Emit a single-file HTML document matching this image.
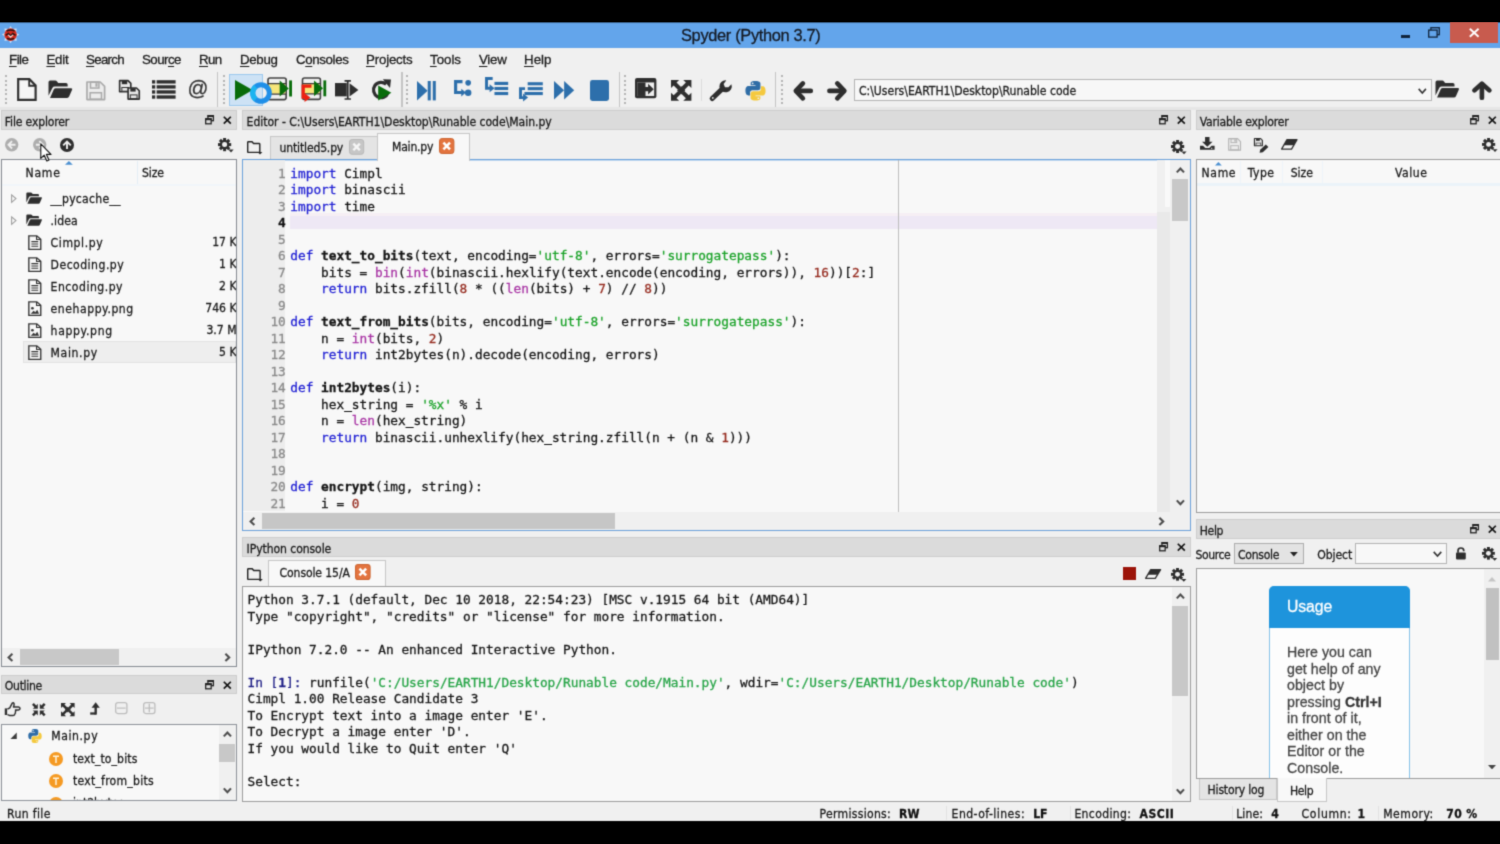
<!DOCTYPE html>
<html><head><meta charset="utf-8"><title>Spyder (Python 3.7)</title>
<style>
html,body{margin:0;padding:0}
body{width:1500px;height:844px;background:#000;position:relative;overflow:hidden}
#r{position:absolute;left:0;top:0;width:1500px;height:844px;overflow:hidden;filter:url(#sf)}
#r div,#r svg,#r pre{position:absolute;box-sizing:border-box}
#r .t,#r .q{white-space:pre}
#r .t,#r .q,#r pre{-webkit-text-stroke:0.28px currentColor}
#r .t span{position:static;white-space:pre}
#r pre{margin:0;white-space:pre}
#r pre span,#r pre b{position:static}
u{text-decoration:underline;text-underline-offset:1.5px;text-decoration-thickness:1px}
</style></head><body><svg width="0" height="0" style="position:absolute"><filter id="sf" x="0" y="0" width="100%" height="100%" color-interpolation-filters="sRGB"><feConvolveMatrix order="3" kernelMatrix="0.0256 0.1088 0.0256 0.1088 0.4624 0.1088 0.0256 0.1088 0.0256" edgeMode="duplicate" preserveAlpha="true"/></filter></svg><div id="r">
<div style="left:0px;top:22px;width:1500px;height:800px;background:#f0f0f0;"></div>
<div style="left:0px;top:22px;width:1500px;height:25.6px;background:#63a5eb;"></div>
<div style="left:0px;top:22px;width:1500px;height:1px;background:#355a82;"></div>
<svg style="left:2.2px;top:25.8px;" width="17.2" height="17.2" viewBox="0 0 17.2 17.2"><path d="M8.6 0 L10.4 3 L14.7 2.5 L14.2 6.8 L17.2 8.6 L14.2 10.4 L14.7 14.7 L10.4 14.2 L8.6 17.2 L6.8 14.2 L2.5 14.7 L3 10.4 L0 8.6 L3 6.8 L2.5 2.5 L6.8 3 Z" fill="#d4e6f8"/><circle cx="8.6" cy="8.6" r="6.3" fill="#d62a1e"/><path d="M4.6 5 Q8.6 3 12.6 5 M3.6 9.4 L6.4 7.4 L8.6 10 L10.8 7.4 L13.6 9.4 M5 12.4 Q8.6 14.2 12.2 12.4" stroke="#2a1414" stroke-width="1.5" fill="none"/><path d="M6.2 8.8 L8.6 11.2 L11 8.8" stroke="#f4e4e0" stroke-width="1.1" fill="none"/></svg>
<div class="t" style="top:25.32px;font:400 16.4px/20px 'Liberation Sans','DejaVu Sans',sans-serif;color:#141a24;left:681px;letter-spacing:-0.33px;">Spyder (Python 3.7)</div>
<div style="left:1400.6px;top:35.4px;width:9.6px;height:2.6px;background:#10243c;"></div>
<svg style="left:1428px;top:27.2px;" width="12" height="10.8" viewBox="0 0 12 10.8"><rect x="2.9" y="0.7" width="8.4" height="7" fill="none" stroke="#10243c" stroke-width="1.3"/><rect x="0.7" y="3.1" width="8.4" height="7" fill="#63a5eb" stroke="#10243c" stroke-width="1.3"/></svg>
<div style="left:1449.6px;top:22.4px;width:48.8px;height:20.4px;background:#c85b4e;"></div>
<svg style="left:1469.4px;top:28px;" width="10.4" height="9.6" viewBox="0 0 10.4 9.6"><path d="M0.8 0.8 L9.6 8.8 M9.6 0.8 L0.8 8.8" stroke="#fff" stroke-width="1.9" fill="none"/></svg>
<div class="t" style="top:51.49px;font:400 13.3px/17px 'Liberation Sans','DejaVu Sans',sans-serif;color:#1a1a1a;left:9px;letter-spacing:-0.51px;"><u>F</u>ile</div>
<div class="t" style="top:51.49px;font:400 13.3px/17px 'Liberation Sans','DejaVu Sans',sans-serif;color:#1a1a1a;left:46.4px;letter-spacing:-0.23px;"><u>E</u>dit</div>
<div class="t" style="top:51.49px;font:400 13.3px/17px 'Liberation Sans','DejaVu Sans',sans-serif;color:#1a1a1a;left:86px;letter-spacing:-0.69px;"><u>S</u>earch</div>
<div class="t" style="top:51.49px;font:400 13.3px/17px 'Liberation Sans','DejaVu Sans',sans-serif;color:#1a1a1a;left:142px;letter-spacing:-0.53px;">Sour<u>c</u>e</div>
<div class="t" style="top:51.49px;font:400 13.3px/17px 'Liberation Sans','DejaVu Sans',sans-serif;color:#1a1a1a;left:199px;letter-spacing:-0.6px;"><u>R</u>un</div>
<div class="t" style="top:51.49px;font:400 13.3px/17px 'Liberation Sans','DejaVu Sans',sans-serif;color:#1a1a1a;left:240px;letter-spacing:-0.32px;"><u>D</u>ebug</div>
<div class="t" style="top:51.49px;font:400 13.3px/17px 'Liberation Sans','DejaVu Sans',sans-serif;color:#1a1a1a;left:296px;letter-spacing:-0.37px;">C<u>o</u>nsoles</div>
<div class="t" style="top:51.49px;font:400 13.3px/17px 'Liberation Sans','DejaVu Sans',sans-serif;color:#1a1a1a;left:366px;letter-spacing:-0.19px;"><u>P</u>rojects</div>
<div class="t" style="top:51.49px;font:400 13.3px/17px 'Liberation Sans','DejaVu Sans',sans-serif;color:#1a1a1a;left:430px;letter-spacing:-0.01px;"><u>T</u>ools</div>
<div class="t" style="top:51.49px;font:400 13.3px/17px 'Liberation Sans','DejaVu Sans',sans-serif;color:#1a1a1a;left:479px;letter-spacing:-0.27px;"><u>V</u>iew</div>
<div class="t" style="top:51.49px;font:400 13.3px/17px 'Liberation Sans','DejaVu Sans',sans-serif;color:#1a1a1a;left:524px;letter-spacing:0.04px;"><u>H</u>elp</div>
<div style="left:4.6px;top:75.4px;width:2px;height:2px;background:#b4b4b4;"></div>
<div style="left:4.6px;top:79.9px;width:2px;height:2px;background:#b4b4b4;"></div>
<div style="left:4.6px;top:84.4px;width:2px;height:2px;background:#b4b4b4;"></div>
<div style="left:4.6px;top:88.9px;width:2px;height:2px;background:#b4b4b4;"></div>
<div style="left:4.6px;top:93.4px;width:2px;height:2px;background:#b4b4b4;"></div>
<div style="left:4.6px;top:97.9px;width:2px;height:2px;background:#b4b4b4;"></div>
<div style="left:4.6px;top:102.4px;width:2px;height:2px;background:#b4b4b4;"></div>
<div style="left:217.2px;top:71.6px;width:1.3px;height:35.4px;background:#c4c4c4;"></div>
<div style="left:223px;top:75.4px;width:2px;height:2px;background:#b4b4b4;"></div>
<div style="left:223px;top:79.9px;width:2px;height:2px;background:#b4b4b4;"></div>
<div style="left:223px;top:84.4px;width:2px;height:2px;background:#b4b4b4;"></div>
<div style="left:223px;top:88.9px;width:2px;height:2px;background:#b4b4b4;"></div>
<div style="left:223px;top:93.4px;width:2px;height:2px;background:#b4b4b4;"></div>
<div style="left:223px;top:97.9px;width:2px;height:2px;background:#b4b4b4;"></div>
<div style="left:223px;top:102.4px;width:2px;height:2px;background:#b4b4b4;"></div>
<div style="left:401.4px;top:71.6px;width:1.3px;height:35.4px;background:#c4c4c4;"></div>
<div style="left:406.4px;top:75.4px;width:2px;height:2px;background:#b4b4b4;"></div>
<div style="left:406.4px;top:79.9px;width:2px;height:2px;background:#b4b4b4;"></div>
<div style="left:406.4px;top:84.4px;width:2px;height:2px;background:#b4b4b4;"></div>
<div style="left:406.4px;top:88.9px;width:2px;height:2px;background:#b4b4b4;"></div>
<div style="left:406.4px;top:93.4px;width:2px;height:2px;background:#b4b4b4;"></div>
<div style="left:406.4px;top:97.9px;width:2px;height:2px;background:#b4b4b4;"></div>
<div style="left:406.4px;top:102.4px;width:2px;height:2px;background:#b4b4b4;"></div>
<div style="left:618.6px;top:71.6px;width:1.3px;height:35.4px;background:#c4c4c4;"></div>
<div style="left:624.2px;top:75.4px;width:2px;height:2px;background:#b4b4b4;"></div>
<div style="left:624.2px;top:79.9px;width:2px;height:2px;background:#b4b4b4;"></div>
<div style="left:624.2px;top:84.4px;width:2px;height:2px;background:#b4b4b4;"></div>
<div style="left:624.2px;top:88.9px;width:2px;height:2px;background:#b4b4b4;"></div>
<div style="left:624.2px;top:93.4px;width:2px;height:2px;background:#b4b4b4;"></div>
<div style="left:624.2px;top:97.9px;width:2px;height:2px;background:#b4b4b4;"></div>
<div style="left:624.2px;top:102.4px;width:2px;height:2px;background:#b4b4b4;"></div>
<div style="left:700.8px;top:79px;width:1px;height:22px;background:#dcdcdc;"></div>
<div style="left:775px;top:71.6px;width:1.3px;height:35.4px;background:#c4c4c4;"></div>
<div style="left:780.6px;top:75.4px;width:2px;height:2px;background:#b4b4b4;"></div>
<div style="left:780.6px;top:79.9px;width:2px;height:2px;background:#b4b4b4;"></div>
<div style="left:780.6px;top:84.4px;width:2px;height:2px;background:#b4b4b4;"></div>
<div style="left:780.6px;top:88.9px;width:2px;height:2px;background:#b4b4b4;"></div>
<div style="left:780.6px;top:93.4px;width:2px;height:2px;background:#b4b4b4;"></div>
<div style="left:780.6px;top:97.9px;width:2px;height:2px;background:#b4b4b4;"></div>
<div style="left:780.6px;top:102.4px;width:2px;height:2px;background:#b4b4b4;"></div>
<svg preserveAspectRatio="none" style="left:17.4px;top:78.4px;overflow:visible;" width="19.8" height="23" viewBox="0 0 20 23.2"><path d="M1.2 1.2 H12.5 L18.8 7.5 V22 H1.2 Z" fill="#f6f6f6" stroke="#2e2e2e" stroke-width="2.2" stroke-linejoin="miter"/><path d="M12.3 1.5 V7.8 H18.6" fill="none" stroke="#2e2e2e" stroke-width="1.8"/></svg>
<svg preserveAspectRatio="none" style="left:48px;top:80px;overflow:visible;" width="24.6" height="18.6" viewBox="0 0 24 18.2"><path d="M0.5 15.5 V2.2 Q0.5 0.6 2.1 0.6 H7.2 Q8.2 0.6 8.8 1.4 L10 3 H17.6 Q19.2 3 19.2 4.6 V6.4 H6.6 Q5 6.4 4.3 7.8 Z" fill="#2e2e2e"/><path d="M2 17.6 L5.6 9.3 Q6.2 8 7.6 8 H22.6 Q24.2 8 23.5 9.5 L20.6 16.2 Q20 17.6 18.6 17.6 Z" fill="#2e2e2e"/></svg>
<svg preserveAspectRatio="none" style="left:86px;top:80.6px;overflow:visible;" width="19.6" height="19.6" viewBox="0 0 20 20"><path d="M1 1 H14.5 L19 5.5 V19 H1 Z" fill="#ececec" stroke="#a9a9a9" stroke-width="1.7" stroke-linejoin="round"/><rect x="4.6" y="1.2" width="8.6" height="6" fill="none" stroke="#a9a9a9" stroke-width="1.5"/><rect x="9.6" y="2.2" width="2.2" height="3.6" fill="#a9a9a9"/><rect x="4.2" y="12" width="11.6" height="6.6" fill="none" stroke="#a9a9a9" stroke-width="1.5"/></svg>
<svg preserveAspectRatio="none" style="left:119px;top:80px;overflow:visible;" width="21.4" height="20.2" viewBox="0 0 21.5 20.5"><g transform="translate(0.00 0.00) scale(0.625)"><path d="M1 1 H14.5 L19 5.5 V19 H1 Z" fill="#e8e8e8" stroke="#2e2e2e" stroke-width="2.6" stroke-linejoin="round"/><rect x="4.6" y="1.2" width="8.6" height="5.6" fill="#2e2e2e"/><rect x="4.6" y="12.2" width="10.8" height="6" fill="#e8e8e8" stroke="#2e2e2e" stroke-width="1.6"/></g><g transform="translate(8.50 7.50) scale(0.625)"><path d="M1 1 H14.5 L19 5.5 V19 H1 Z" fill="#e8e8e8" stroke="#2e2e2e" stroke-width="2.6" stroke-linejoin="round"/><rect x="4.6" y="1.2" width="8.6" height="5.6" fill="#2e2e2e"/><rect x="4.6" y="12.2" width="10.8" height="6" fill="#e8e8e8" stroke="#2e2e2e" stroke-width="1.6"/></g></svg>
<svg preserveAspectRatio="none" style="left:151.6px;top:80px;overflow:visible;" width="23.6" height="18.8" viewBox="0 0 23.4 19"><rect x="0" y="0.2" width="3.2" height="3.4" fill="#2e2e2e"/><rect x="4.6" y="0.2" width="18.8" height="3.4" fill="#2e2e2e"/><rect x="0" y="5.3" width="3.2" height="3.4" fill="#2e2e2e"/><rect x="4.6" y="5.3" width="18.8" height="3.4" fill="#2e2e2e"/><rect x="0" y="10.4" width="3.2" height="3.4" fill="#2e2e2e"/><rect x="4.6" y="10.4" width="18.8" height="3.4" fill="#2e2e2e"/><rect x="0" y="15.5" width="3.2" height="3.4" fill="#2e2e2e"/><rect x="4.6" y="15.5" width="18.8" height="3.4" fill="#2e2e2e"/></svg>
<div class="t" style="top:75.36px;font:400 20.6px/25px 'Liberation Sans','DejaVu Sans',sans-serif;color:#333;left:187.6px;">@</div>
<div style="left:228.8px;top:73.6px;width:34.6px;height:32.2px;background:#cde2f5;border:1px solid #9cc8ee;"></div>
<svg preserveAspectRatio="none" style="left:235px;top:80px;overflow:visible;" width="17.6" height="20.2" viewBox="0 0 17.5 20"><path d="M0 0 L17.5 10 L0 20 Z" fill="#086c0a"/></svg>
<svg preserveAspectRatio="none" style="left:267.4px;top:76.8px;overflow:visible;" width="25.2" height="23.6" viewBox="0 0 25 23.5"><rect x="1" y="1" width="18" height="21.5" rx="2" fill="#f0f0f0" stroke="#404040" stroke-width="1.6"/><rect x="1.8" y="6.8" width="16.4" height="10" fill="#f7e67a"/><path d="M1 6.6 H19 M1 17 H19" stroke="#3a3a3a" stroke-width="1.3"/><path d="M12.6 3.4 L21.6 11.4 L12.6 19.4 Z" fill="#086c0a"/><rect x="22" y="3.4" width="2.8" height="16" fill="#086c0a"/></svg>
<svg preserveAspectRatio="none" style="left:301px;top:76.8px;overflow:visible;" width="25.4" height="24.4" viewBox="0 0 25.5 24.5"><rect x="1.5" y="1" width="18" height="21.5" rx="2" fill="#f0f0f0" stroke="#404040" stroke-width="1.6"/><rect x="2.3" y="6.8" width="16.4" height="10" fill="#f7e67a"/><path d="M1.5 6.6 H19.5 M1.5 17 H19.5" stroke="#3a3a3a" stroke-width="1.3"/><path d="M10.5 9.2 H2.2 V20.2 H5" fill="none" stroke="#ee2010" stroke-width="3.3"/><path d="M3.6 16.2 L9.4 20.6 L3.6 25 Z" fill="#ee2010"/><path d="M13.1 3.4 L22.1 11.4 L13.1 19.4 Z" fill="#086c0a"/><rect x="22.5" y="3.4" width="2.8" height="16" fill="#086c0a"/></svg>
<svg preserveAspectRatio="none" style="left:335px;top:79.8px;overflow:visible;" width="23.4" height="19.8" viewBox="0 0 23.5 19.6"><rect x="0" y="3" width="11.8" height="13.2" fill="#2e2e2e"/><path d="M9.6 0.8 H16 M9.6 18.8 H16 M12.8 0.8 V18.8" stroke="#2e2e2e" stroke-width="1.7" fill="none"/><path d="M14.6 3.2 L23.5 9.8 L14.6 16.4 Z" fill="#2e2e2e"/></svg>
<svg preserveAspectRatio="none" style="left:371.4px;top:78.6px;overflow:visible;" width="20.6" height="21.8" viewBox="0 0 20.6 21.6"><path d="M15.2 5.2 A7.6 7.6 0 1 0 17.2 13.6" fill="none" stroke="#2e2e2e" stroke-width="3.2"/><path d="M11.8 0.2 L20 0.6 L19 8.8 Z" fill="#2e2e2e"/><path d="M7.2 6.4 L20.4 13.6 L7.2 21.4 Z" fill="#086c0a"/></svg>
<svg style="left:249.3px;top:81.2px;" width="24" height="24" viewBox="0 0 24 24"><circle cx="12" cy="12" r="8.3" fill="none" stroke="#1f8fe8" stroke-width="5"/><path d="M6.6 18.3 A8.3 8.3 0 0 1 6.6 5.7" fill="none" stroke="#1cb4f0" stroke-width="5"/></svg>
<svg preserveAspectRatio="none" style="left:416.6px;top:80.8px;overflow:visible;" width="18.8" height="19.4" viewBox="0 0 18.6 19.2"><path d="M0 0 L10.5 9.6 L0 19.2 Z" fill="#2d6fab"/><rect x="10.6" y="0" width="3" height="19.2" fill="#2d6fab"/><rect x="15.6" y="0" width="3" height="19.2" fill="#2d6fab"/></svg>
<svg preserveAspectRatio="none" style="left:453.6px;top:80px;overflow:visible;" width="17.8" height="16.2" viewBox="0 0 17.6 16"><path d="M8.4 1.6 H1.6 V12.4 H8.4" fill="none" stroke="#2d6fab" stroke-width="3.1"/><path d="M7.2 8.6 L11.8 12.4 L7.2 16.2 Z" fill="#2d6fab"/><circle cx="14" cy="2.8" r="2.8" fill="#2d6fab"/><circle cx="14" cy="12.6" r="3.2" fill="#2d6fab"/></svg>
<svg preserveAspectRatio="none" style="left:485px;top:77px;overflow:visible;" width="23.2" height="18.2" viewBox="0 0 23 18"><path d="M7.6 1.5 H1.5 V11.2 H5.5" fill="none" stroke="#2d6fab" stroke-width="2.9"/><path d="M4.6 7.2 L9.4 11.2 L4.6 15.2 Z" fill="#2d6fab"/><rect x="9.4" y="4.8" width="13.6" height="3.1" fill="#2d6fab"/><rect x="9.4" y="9.8" width="13.6" height="3.1" fill="#2d6fab"/><rect x="9.4" y="14.8" width="13.6" height="3.1" fill="#2d6fab"/></svg>
<svg preserveAspectRatio="none" style="left:518.6px;top:81.8px;overflow:visible;" width="24" height="19.4" viewBox="0 0 23.8 19.4"><rect x="8.6" y="0.2" width="15" height="3.1" fill="#2d6fab"/><rect x="8.6" y="5.1" width="15" height="3.1" fill="#2d6fab"/><rect x="5.4" y="10" width="18.2" height="3.1" fill="#2d6fab"/><path d="M6 6.6 H1.5 V15.6 H4.6" fill="none" stroke="#2d6fab" stroke-width="2.9"/><path d="M4 11.6 L9 15.6 L4 19.4 Z" fill="#2d6fab"/></svg>
<svg preserveAspectRatio="none" style="left:554px;top:81px;overflow:visible;" width="20.2" height="18.4" viewBox="0 0 20 18"><path d="M0 0 L10 9 L0 18 Z" fill="#2d6fab"/><path d="M10 0 L20 9 L10 18 Z" fill="#2d6fab"/></svg>
<div style="left:589.6px;top:80px;width:19.6px;height:20.8px;background:#2d6fab;border-radius:2.4px;"></div>
<svg preserveAspectRatio="none" style="left:634.6px;top:78.4px;overflow:visible;" width="21.4" height="20.2" viewBox="0 0 21.2 20"><rect x="0" y="0" width="21.2" height="20" rx="2" fill="#2e2e2e"/><rect x="2.2" y="4.4" width="16.8" height="13.4" fill="#f0f0f0"/><rect x="2.2" y="4.4" width="8.2" height="13.4" fill="#2e2e2e"/><path d="M8.2 9 H13 V5.8 L18.6 11.1 L13 16.4 V13.2 H8.2 Z" fill="#2e2e2e"/></svg>
<svg preserveAspectRatio="none" style="left:670.6px;top:80px;overflow:visible;" width="20.4" height="20.8" viewBox="0 0 20 20.6"><path d="M0 0 H8 L5.4 2.6 L9.8 7 L7 9.8 L2.6 5.4 L0 8 Z" fill="#2e2e2e"/><g transform="translate(20 0) scale(-1 1)"><path d="M0 0 H8 L5.4 2.6 L9.8 7 L7 9.8 L2.6 5.4 L0 8 Z" fill="#2e2e2e"/></g><g transform="translate(0 20.6) scale(1 -1)"><path d="M0 0 H8 L5.4 2.6 L9.8 7 L7 9.8 L2.6 5.4 L0 8 Z" fill="#2e2e2e"/></g><g transform="translate(20 20.6) scale(-1 -1)"><path d="M0 0 H8 L5.4 2.6 L9.8 7 L7 9.8 L2.6 5.4 L0 8 Z" fill="#2e2e2e"/></g><rect x="7.2" y="7.4" width="5.6" height="5.8" fill="#2e2e2e" transform="rotate(45 10 10.3)"/></svg>
<svg preserveAspectRatio="none" style="left:710px;top:80.4px;overflow:visible;" width="22" height="20.8" viewBox="0 0 22 21.5"><path d="M2.2 19.2 L12.4 9" stroke="#2e2e2e" stroke-width="5" stroke-linecap="round" fill="none"/><path d="M21.4 4.4 A6.2 6.2 0 1 1 16.2 0.4 L13.6 4.2 L15 7.4 L18.4 7.6 Z" fill="#2e2e2e"/><circle cx="2.8" cy="18.6" r="0.9" fill="#f0f0f0"/></svg>
<svg preserveAspectRatio="none" style="left:745px;top:80.6px;overflow:visible;" width="21" height="19.6" viewBox="0 0 20 19.6"><path d="M9.9 0 C5 0 5.4 2.1 5.4 2.1 V4.3 H10 V5 H3.5 C3.5 5 0.4 4.6 0.4 9.6 C0.4 14.6 3.1 14.4 3.1 14.4 H4.8 V12 C4.8 12 4.7 9.3 7.5 9.3 H12.1 C12.1 9.3 14.7 9.3 14.7 6.8 V2.6 C14.7 2.6 15.1 0 9.9 0 Z M7.3 1.5 A0.85 0.85 0 1 1 7.3 3.2 A0.85 0.85 0 1 1 7.3 1.5 Z" fill="#2f6da6"/><path d="M10.1 19.6 C15 19.6 14.6 17.5 14.6 17.5 V15.3 H10 V14.6 H16.5 C16.5 14.6 19.6 15 19.6 10 C19.6 5 16.9 5.2 16.9 5.2 H15.2 V7.6 C15.2 7.6 15.3 10.3 12.5 10.3 H7.9 C7.9 10.3 5.3 10.3 5.3 12.8 V17 C5.3 17 4.9 19.6 10.1 19.6 Z M12.7 18.1 A0.85 0.85 0 1 1 12.7 16.4 A0.85 0.85 0 1 1 12.7 18.1 Z" fill="#f4c93f"/></svg>
<svg preserveAspectRatio="none" style="left:793px;top:81px;overflow:visible;" width="20.2" height="19.8" viewBox="0 0 20 19.6"><path d="M9.8 2.4 L2.8 9.8 L9.8 17.2" fill="none" stroke="#2e2e2e" stroke-width="4.6" stroke-linejoin="round" stroke-linecap="round"/><path d="M3.4 9.8 H17.6" stroke="#2e2e2e" stroke-width="4.6" stroke-linecap="round"/></svg>
<svg preserveAspectRatio="none" style="left:826.6px;top:81px;overflow:visible;" width="20.2" height="19.8" viewBox="0 0 20 19.6"><g transform="translate(20 0) scale(-1 1)"><path d="M9.8 2.4 L2.8 9.8 L9.8 17.2" fill="none" stroke="#2e2e2e" stroke-width="4.6" stroke-linejoin="round" stroke-linecap="round"/><path d="M3.4 9.8 H17.6" stroke="#2e2e2e" stroke-width="4.6" stroke-linecap="round"/></g></svg>
<div style="left:854px;top:78.8px;width:577.8px;height:22px;background:#f7f7f7;border:1px solid #b4b4b4;"></div>
<div class="t" style="top:83.01px;font:400 12.1px/16px 'DejaVu Sans Condensed','Liberation Sans',sans-serif;color:#1c1c1c;left:859px;letter-spacing:-0.02px;">C:\Users\EARTH1\Desktop\Runable code</div>
<svg preserveAspectRatio="none" style="left:1417.8px;top:87.6px;overflow:visible;" width="8.6" height="6" viewBox="0 0 8.8 5.8"><path d="M0.7 0.8 L4.4 4.8 L8.1 0.8" stroke="#333" stroke-width="1.6" fill="none"/></svg>
<svg preserveAspectRatio="none" style="left:1435px;top:80px;overflow:visible;" width="24.4" height="18.2" viewBox="0 0 24 18.2"><path d="M0.5 15.5 V2.2 Q0.5 0.6 2.1 0.6 H7.2 Q8.2 0.6 8.8 1.4 L10 3 H17.6 Q19.2 3 19.2 4.6 V6.4 H6.6 Q5 6.4 4.3 7.8 Z" fill="#2e2e2e"/><path d="M2 17.6 L5.6 9.3 Q6.2 8 7.6 8 H22.6 Q24.2 8 23.5 9.5 L20.6 16.2 Q20 17.6 18.6 17.6 Z" fill="#2e2e2e"/></svg>
<svg preserveAspectRatio="none" style="left:1472.4px;top:81.2px;overflow:visible;" width="19.8" height="19.2" viewBox="0 0 19.6 20"><g transform="rotate(90 9.8 9.8)"><path d="M9.8 2.4 L2.8 9.8 L9.8 17.2" fill="none" stroke="#2e2e2e" stroke-width="4.6" stroke-linejoin="round" stroke-linecap="round"/><path d="M3.4 9.8 H17.6" stroke="#2e2e2e" stroke-width="4.6" stroke-linecap="round"/></g></svg>
<div style="left:0px;top:107px;width:1500px;height:3.4px;background:#e6e6e6;"></div>
<div style="left:0.6px;top:110.2px;width:236.8px;height:19.4px;background:#dbdbdb;border:1px solid #cdcdcd;"></div>
<div class="t" style="top:113.61px;font:400 12.1px/16px 'DejaVu Sans Condensed','Liberation Sans',sans-serif;color:#1a1a1a;left:4.8px;letter-spacing:-0.16px;">File explorer</div>
<svg preserveAspectRatio="none" style="left:205.4px;top:114.7px;overflow:visible;" width="9.2" height="9.6" viewBox="0 0 9.4 9.6"><rect x="3" y="0.7" width="5.6" height="5" fill="none" stroke="#222" stroke-width="1.3"/><rect x="2.6" y="0.2" width="6.4" height="1.8" fill="#222"/><rect x="0.7" y="3.8" width="5.6" height="5" fill="#dcdcdc" stroke="#222" stroke-width="1.3"/><rect x="0.2" y="3.3" width="6.6" height="1.9" fill="#222"/></svg>
<svg preserveAspectRatio="none" style="left:223.4px;top:115.7px;overflow:visible;" width="8.6" height="8.4" viewBox="0 0 8.8 8.8"><path d="M0.8 0.8 L8 8 M8 0.8 L0.8 8" stroke="#111" stroke-width="1.7" fill="none"/></svg>
<svg preserveAspectRatio="none" style="left:5.4px;top:137.8px;overflow:visible;" width="13.4" height="13.6" viewBox="0 0 14 14"><circle cx="7" cy="7" r="7" fill="#adadad"/><g transform="rotate(0 7 7)"><path d="M7.4 3.2 L3.6 7 L7.4 10.8 M4 7 H11" stroke="#f0f0f0" stroke-width="1.9" fill="none"/></g></svg>
<svg preserveAspectRatio="none" style="left:33px;top:137.8px;overflow:visible;" width="13.4" height="13.6" viewBox="0 0 14 14"><circle cx="7" cy="7" r="7" fill="#adadad"/><g transform="rotate(180 7 7)"><path d="M7.4 3.2 L3.6 7 L7.4 10.8 M4 7 H11" stroke="#f0f0f0" stroke-width="1.9" fill="none"/></g></svg>
<svg preserveAspectRatio="none" style="left:60px;top:137.8px;overflow:visible;" width="14" height="14" viewBox="0 0 14 14"><circle cx="7" cy="7" r="7" fill="#2e2e2e"/><g transform="rotate(90 7 7)"><path d="M7.4 3.2 L3.6 7 L7.4 10.8 M4 7 H11" stroke="#f0f0f0" stroke-width="1.9" fill="none"/></g></svg>
<svg preserveAspectRatio="none" style="left:217.6px;top:138.2px;overflow:visible;" width="15.6" height="14.6" viewBox="0 0 15.6 14.6"><rect x="5.10" y="0.00" width="3" height="3.4" fill="#2e2e2e" transform="rotate(0 6.60 6.60)"/><rect x="5.10" y="0.00" width="3" height="3.4" fill="#2e2e2e" transform="rotate(45 6.60 6.60)"/><rect x="5.10" y="0.00" width="3" height="3.4" fill="#2e2e2e" transform="rotate(90 6.60 6.60)"/><rect x="5.10" y="0.00" width="3" height="3.4" fill="#2e2e2e" transform="rotate(135 6.60 6.60)"/><rect x="5.10" y="0.00" width="3" height="3.4" fill="#2e2e2e" transform="rotate(180 6.60 6.60)"/><rect x="5.10" y="0.00" width="3" height="3.4" fill="#2e2e2e" transform="rotate(225 6.60 6.60)"/><rect x="5.10" y="0.00" width="3" height="3.4" fill="#2e2e2e" transform="rotate(270 6.60 6.60)"/><rect x="5.10" y="0.00" width="3" height="3.4" fill="#2e2e2e" transform="rotate(315 6.60 6.60)"/><circle cx="6.6" cy="6.6" r="4.7" fill="#2e2e2e"/><circle cx="6.6" cy="6.6" r="2.5" fill="#f0f0f0"/><path d="M10.4 11.6 H15.6 L13 14.4 Z" fill="#2e2e2e"/></svg>
<div style="left:0.6px;top:159.4px;width:236.8px;height:508px;background:#f8f8f8;border:1px solid #858a92;"></div>
<div class="t" style="top:165.41px;font:400 12.1px/16px 'DejaVu Sans Condensed','Liberation Sans',sans-serif;color:#1a1a1a;left:25.6px;letter-spacing:0.72px;">Name</div>
<div class="t" style="top:165.41px;font:400 12.1px/16px 'DejaVu Sans Condensed','Liberation Sans',sans-serif;color:#1a1a1a;left:142px;letter-spacing:-0.14px;">Size</div>
<svg preserveAspectRatio="none" style="left:65.4px;top:161.2px;overflow:visible;" width="7.8" height="3.8" viewBox="0 0 8 4"><path d="M0 4 L4 0 L8 4 Z" fill="#4b8fd0"/></svg>
<div style="left:137px;top:161px;width:1px;height:24px;background:#e4eef5;"></div>
<div style="left:1.6px;top:184.4px;width:234.8px;height:2px;background:#f1f6fa;"></div>
<svg preserveAspectRatio="none" style="left:11px;top:193.8px;overflow:visible;" width="5.8" height="9.2" viewBox="0 0 5.6 9.2"><path d="M0.6 0.8 L4.8 4.6 L0.6 8.4 Z" fill="#f8f8f8" stroke="#9a9a9a" stroke-width="1"/></svg>
<svg preserveAspectRatio="none" style="left:26px;top:192px;overflow:visible;" width="16.2" height="12.2" viewBox="0 0 24 18.2"><path d="M0.5 15.5 V2.2 Q0.5 0.6 2.1 0.6 H7.2 Q8.2 0.6 8.8 1.4 L10 3 H17.6 Q19.2 3 19.2 4.6 V6.4 H6.6 Q5 6.4 4.3 7.8 Z" fill="#2e2e2e"/><path d="M2 17.6 L5.6 9.3 Q6.2 8 7.6 8 H22.6 Q24.2 8 23.5 9.5 L20.6 16.2 Q20 17.6 18.6 17.6 Z" fill="#2e2e2e"/></svg>
<div class="t" style="top:190.61px;font:400 12.1px/16px 'DejaVu Sans Condensed','Liberation Sans',sans-serif;color:#1a1a1a;left:50.6px;letter-spacing:0.26px;">__pycache__</div>
<svg preserveAspectRatio="none" style="left:11px;top:215.8px;overflow:visible;" width="5.8" height="9.2" viewBox="0 0 5.6 9.2"><path d="M0.6 0.8 L4.8 4.6 L0.6 8.4 Z" fill="#f8f8f8" stroke="#9a9a9a" stroke-width="1"/></svg>
<svg preserveAspectRatio="none" style="left:26px;top:214px;overflow:visible;" width="16.2" height="12.2" viewBox="0 0 24 18.2"><path d="M0.5 15.5 V2.2 Q0.5 0.6 2.1 0.6 H7.2 Q8.2 0.6 8.8 1.4 L10 3 H17.6 Q19.2 3 19.2 4.6 V6.4 H6.6 Q5 6.4 4.3 7.8 Z" fill="#2e2e2e"/><path d="M2 17.6 L5.6 9.3 Q6.2 8 7.6 8 H22.6 Q24.2 8 23.5 9.5 L20.6 16.2 Q20 17.6 18.6 17.6 Z" fill="#2e2e2e"/></svg>
<div class="t" style="top:212.61px;font:400 12.1px/16px 'DejaVu Sans Condensed','Liberation Sans',sans-serif;color:#1a1a1a;left:50.6px;letter-spacing:0.05px;">.idea</div>
<svg preserveAspectRatio="none" style="left:28px;top:234.8px;overflow:visible;" width="13.6" height="15.2" viewBox="0 0 13 16"><path d="M0.8 0.8 H8.4 L12.2 4.6 V15.2 H0.8 Z" fill="#f8f8f8" stroke="#333" stroke-width="1.3"/><path d="M8.2 1 V4.8 H12" fill="none" stroke="#333" stroke-width="1.1"/><path d="M3.2 7 H9.8 M3.2 9.4 H9.8 M3.2 11.8 H9.8" stroke="#333" stroke-width="1.1"/></svg>
<div class="t" style="top:234.61px;font:400 12.1px/16px 'DejaVu Sans Condensed','Liberation Sans',sans-serif;color:#1a1a1a;left:50.6px;letter-spacing:0.58px;">Cimpl.py</div>
<div style="left:180px;top:232px;width:56.2px;height:20px;overflow:hidden"><div class="q" style="right:-0.4px;top:0;font:400 12.1px/20px 'DejaVu Sans Condensed','Liberation Sans',sans-serif;color:#1a1a1a">17 K</div></div>
<svg preserveAspectRatio="none" style="left:28px;top:256.8px;overflow:visible;" width="13.6" height="15.2" viewBox="0 0 13 16"><path d="M0.8 0.8 H8.4 L12.2 4.6 V15.2 H0.8 Z" fill="#f8f8f8" stroke="#333" stroke-width="1.3"/><path d="M8.2 1 V4.8 H12" fill="none" stroke="#333" stroke-width="1.1"/><path d="M3.2 7 H9.8 M3.2 9.4 H9.8 M3.2 11.8 H9.8" stroke="#333" stroke-width="1.1"/></svg>
<div class="t" style="top:256.61px;font:400 12.1px/16px 'DejaVu Sans Condensed','Liberation Sans',sans-serif;color:#1a1a1a;left:50.6px;letter-spacing:0.48px;">Decoding.py</div>
<div style="left:180px;top:254px;width:56.2px;height:20px;overflow:hidden"><div class="q" style="right:-0.4px;top:0;font:400 12.1px/20px 'DejaVu Sans Condensed','Liberation Sans',sans-serif;color:#1a1a1a">1 K</div></div>
<svg preserveAspectRatio="none" style="left:28px;top:278.8px;overflow:visible;" width="13.6" height="15.2" viewBox="0 0 13 16"><path d="M0.8 0.8 H8.4 L12.2 4.6 V15.2 H0.8 Z" fill="#f8f8f8" stroke="#333" stroke-width="1.3"/><path d="M8.2 1 V4.8 H12" fill="none" stroke="#333" stroke-width="1.1"/><path d="M3.2 7 H9.8 M3.2 9.4 H9.8 M3.2 11.8 H9.8" stroke="#333" stroke-width="1.1"/></svg>
<div class="t" style="top:278.61px;font:400 12.1px/16px 'DejaVu Sans Condensed','Liberation Sans',sans-serif;color:#1a1a1a;left:50.6px;letter-spacing:0.5px;">Encoding.py</div>
<div style="left:180px;top:276px;width:56.2px;height:20px;overflow:hidden"><div class="q" style="right:-0.4px;top:0;font:400 12.1px/20px 'DejaVu Sans Condensed','Liberation Sans',sans-serif;color:#1a1a1a">2 K</div></div>
<svg preserveAspectRatio="none" style="left:28px;top:300.8px;overflow:visible;" width="13.6" height="15.2" viewBox="0 0 13 16"><path d="M0.8 0.8 H8.4 L12.2 4.6 V15.2 H0.8 Z" fill="#f8f8f8" stroke="#333" stroke-width="1.3"/><path d="M8.2 1 V4.8 H12" fill="none" stroke="#333" stroke-width="1.1"/><circle cx="4.2" cy="7.6" r="1.3" fill="#333"/><path d="M2.6 13.4 L5.4 10.2 L7 11.8 L8.8 9.2 L10.6 13.4 Z" fill="#333"/></svg>
<div class="t" style="top:300.61px;font:400 12.1px/16px 'DejaVu Sans Condensed','Liberation Sans',sans-serif;color:#1a1a1a;left:50.6px;letter-spacing:0.55px;">enehappy.png</div>
<div style="left:180px;top:298px;width:56.2px;height:20px;overflow:hidden"><div class="q" style="right:-0.4px;top:0;font:400 12.1px/20px 'DejaVu Sans Condensed','Liberation Sans',sans-serif;color:#1a1a1a">746 K</div></div>
<svg preserveAspectRatio="none" style="left:28px;top:322.8px;overflow:visible;" width="13.6" height="15.2" viewBox="0 0 13 16"><path d="M0.8 0.8 H8.4 L12.2 4.6 V15.2 H0.8 Z" fill="#f8f8f8" stroke="#333" stroke-width="1.3"/><path d="M8.2 1 V4.8 H12" fill="none" stroke="#333" stroke-width="1.1"/><circle cx="4.2" cy="7.6" r="1.3" fill="#333"/><path d="M2.6 13.4 L5.4 10.2 L7 11.8 L8.8 9.2 L10.6 13.4 Z" fill="#333"/></svg>
<div class="t" style="top:322.61px;font:400 12.1px/16px 'DejaVu Sans Condensed','Liberation Sans',sans-serif;color:#1a1a1a;left:50.6px;letter-spacing:0.66px;">happy.png</div>
<div style="left:180px;top:320px;width:56.2px;height:20px;overflow:hidden"><div class="q" style="right:-0.4px;top:0;font:400 12.1px/20px 'DejaVu Sans Condensed','Liberation Sans',sans-serif;color:#1a1a1a">3.7 M</div></div>
<div style="left:23.2px;top:341.2px;width:213px;height:21.4px;background:#eeeeee;border:1px solid #e3e3e3;"></div>
<svg preserveAspectRatio="none" style="left:28px;top:344.8px;overflow:visible;" width="13.6" height="15.2" viewBox="0 0 13 16"><path d="M0.8 0.8 H8.4 L12.2 4.6 V15.2 H0.8 Z" fill="#f8f8f8" stroke="#333" stroke-width="1.3"/><path d="M8.2 1 V4.8 H12" fill="none" stroke="#333" stroke-width="1.1"/><path d="M3.2 7 H9.8 M3.2 9.4 H9.8 M3.2 11.8 H9.8" stroke="#333" stroke-width="1.1"/></svg>
<div class="t" style="top:344.61px;font:400 12.1px/16px 'DejaVu Sans Condensed','Liberation Sans',sans-serif;color:#1a1a1a;left:50.6px;letter-spacing:0.63px;">Main.py</div>
<div style="left:180px;top:342px;width:56.2px;height:20px;overflow:hidden"><div class="q" style="right:-0.4px;top:0;font:400 12.1px/20px 'DejaVu Sans Condensed','Liberation Sans',sans-serif;color:#1a1a1a">5 K</div></div>
<div style="left:1.6px;top:647.6px;width:234.8px;height:18.8px;background:#f0f0f0;"></div>
<div style="left:20px;top:648.6px;width:98.8px;height:16.8px;background:#c8c8c8;"></div>
<svg preserveAspectRatio="none" style="left:6.2px;top:652.6px;overflow:visible;" width="8.8" height="8.8" viewBox="0 0 8.8 8.8"><g transform="rotate(90 4.4 4.4)"><path d="M0.8 2.4 L4.4 6.2 L8 2.4" stroke="#4c4c4c" stroke-width="2.1" fill="none"/></g></svg>
<svg preserveAspectRatio="none" style="left:223px;top:652.6px;overflow:visible;" width="8.8" height="8.8" viewBox="0 0 8.8 8.8"><g transform="rotate(270 4.4 4.4)"><path d="M0.8 2.4 L4.4 6.2 L8 2.4" stroke="#4c4c4c" stroke-width="2.1" fill="none"/></g></svg>
<svg style="left:40.4px;top:143.4px;" width="12" height="19" viewBox="0 0 12 19"><path d="M0.8 0.8 V15.4 L4.2 12.2 L6.8 18 L9 17 L6.4 11.4 H11 Z" fill="#fff" stroke="#111" stroke-width="1.1" stroke-linejoin="round"/></svg>
<div style="left:0.6px;top:675.4px;width:236.8px;height:18.6px;background:#dbdbdb;border:1px solid #cdcdcd;"></div>
<div class="t" style="top:678.01px;font:400 12.1px/16px 'DejaVu Sans Condensed','Liberation Sans',sans-serif;color:#1a1a1a;left:4.8px;letter-spacing:-0.31px;">Outline</div>
<svg preserveAspectRatio="none" style="left:205.4px;top:679.5px;overflow:visible;" width="9.2" height="9.6" viewBox="0 0 9.4 9.6"><rect x="3" y="0.7" width="5.6" height="5" fill="none" stroke="#222" stroke-width="1.3"/><rect x="2.6" y="0.2" width="6.4" height="1.8" fill="#222"/><rect x="0.7" y="3.8" width="5.6" height="5" fill="#dcdcdc" stroke="#222" stroke-width="1.3"/><rect x="0.2" y="3.3" width="6.6" height="1.9" fill="#222"/></svg>
<svg preserveAspectRatio="none" style="left:223.4px;top:680.5px;overflow:visible;" width="8.6" height="8.4" viewBox="0 0 8.8 8.8"><path d="M0.8 0.8 L8 8 M8 0.8 L0.8 8" stroke="#111" stroke-width="1.7" fill="none"/></svg>
<svg preserveAspectRatio="none" style="left:4px;top:701.8px;overflow:visible;" width="16.6" height="14.2" viewBox="0 0 17.2 14.2"><path d="M0.8 6.4 H3.4 V13 H0.8 Z" fill="#2e2e2e"/><path d="M3.6 7.2 L6 5.8 L8.4 1.4 Q9.6 0.2 10.4 1.6 Q10.8 2.8 9.8 5 H15 Q16.6 5.2 16.6 6.5 Q16.6 7.8 15 7.9 H11.8 Q12.6 9 11.8 10 Q12.2 11.2 11.2 12 Q11.2 13.4 9.6 13.4 H5.6 L3.6 12.6" fill="#f0f0f0" stroke="#2e2e2e" stroke-width="1.5" stroke-linejoin="round"/></svg>
<svg preserveAspectRatio="none" style="left:31.6px;top:703px;overflow:visible;" width="13.6" height="13.2" viewBox="0 0 13.6 13.2"><path d="M5.8 5.8 H0.8 L2.4 4.2 L0 1.8 L1.8 0 L4.2 2.4 L5.8 0.8 Z" fill="#2e2e2e"/><g transform="translate(13.6 0) scale(-1 1)"><path d="M5.8 5.8 H0.8 L2.4 4.2 L0 1.8 L1.8 0 L4.2 2.4 L5.8 0.8 Z" fill="#2e2e2e"/></g><g transform="translate(0 13.2) scale(1 -1)"><path d="M5.8 5.8 H0.8 L2.4 4.2 L0 1.8 L1.8 0 L4.2 2.4 L5.8 0.8 Z" fill="#2e2e2e"/></g><g transform="translate(13.6 13.2) scale(-1 -1)"><path d="M5.8 5.8 H0.8 L2.4 4.2 L0 1.8 L1.8 0 L4.2 2.4 L5.8 0.8 Z" fill="#2e2e2e"/></g></svg>
<svg preserveAspectRatio="none" style="left:60.6px;top:703px;overflow:visible;" width="13.6" height="13.2" viewBox="0 0 13.6 13.2"><path d="M0 0 H5 L3.4 1.6 L6.4 4.6 L4.6 6.4 L1.6 3.4 L0 5 Z" fill="#2e2e2e"/><g transform="translate(13.6 0) scale(-1 1)"><path d="M0 0 H5 L3.4 1.6 L6.4 4.6 L4.6 6.4 L1.6 3.4 L0 5 Z" fill="#2e2e2e"/></g><g transform="translate(0 13.2) scale(1 -1)"><path d="M0 0 H5 L3.4 1.6 L6.4 4.6 L4.6 6.4 L1.6 3.4 L0 5 Z" fill="#2e2e2e"/></g><g transform="translate(13.6 13.2) scale(-1 -1)"><path d="M0 0 H5 L3.4 1.6 L6.4 4.6 L4.6 6.4 L1.6 3.4 L0 5 Z" fill="#2e2e2e"/></g><rect x="4.8" y="4.6" width="4" height="4" fill="#2e2e2e" transform="rotate(45 6.8 6.6)"/></svg>
<svg preserveAspectRatio="none" style="left:90px;top:702.2px;overflow:visible;" width="10" height="13.2" viewBox="0 0 10.4 13.4"><path d="M5.9 12.8 V4" stroke="#2e2e2e" stroke-width="2.5" fill="none"/><path d="M1.6 5.8 L5.9 0.3 L10.2 5.8 Z" fill="#2e2e2e"/><path d="M0.2 11.7 H6" stroke="#2e2e2e" stroke-width="2.3"/></svg>
<svg preserveAspectRatio="none" style="left:115.2px;top:702.4px;overflow:visible;" width="12.6" height="12.2" viewBox="0 0 12.6 13.2"><rect x="0.7" y="0.7" width="11.2" height="11.8" rx="2.2" fill="none" stroke="#bcbcbc" stroke-width="1.3"/><path d="M2 6.6 H10.6" stroke="#bcbcbc" stroke-width="1.3"/></svg>
<svg preserveAspectRatio="none" style="left:142.8px;top:702.4px;overflow:visible;" width="12.6" height="12.2" viewBox="0 0 12.6 13.2"><rect x="0.7" y="0.7" width="11.2" height="11.8" rx="2.2" fill="none" stroke="#bcbcbc" stroke-width="1.3"/><path d="M2 6.6 H10.6" stroke="#bcbcbc" stroke-width="1.3"/><path d="M6.3 2 V11.2" stroke="#bcbcbc" stroke-width="1.3"/></svg>
<div style="left:0.6px;top:723.6px;width:236.8px;height:77.6px;background:#f8f8f8;border:1px solid #8d9299;overflow:hidden">
</div>
<div style="left:1.6px;top:724.6px;width:234.8px;height:75.6px;background:#f8f8f8;"></div>
<svg preserveAspectRatio="none" style="left:9.8px;top:732.2px;overflow:visible;" width="7.2" height="7.4" viewBox="0 0 6.4 6.4"><path d="M6 0.4 V6 H0.4 Z" fill="#3a3a3a"/></svg>
<svg preserveAspectRatio="none" style="left:28.2px;top:729px;overflow:visible;" width="14" height="14" viewBox="0 0 20 19.6"><path d="M9.9 0 C5 0 5.4 2.1 5.4 2.1 V4.3 H10 V5 H3.5 C3.5 5 0.4 4.6 0.4 9.6 C0.4 14.6 3.1 14.4 3.1 14.4 H4.8 V12 C4.8 12 4.7 9.3 7.5 9.3 H12.1 C12.1 9.3 14.7 9.3 14.7 6.8 V2.6 C14.7 2.6 15.1 0 9.9 0 Z M7.3 1.5 A0.85 0.85 0 1 1 7.3 3.2 A0.85 0.85 0 1 1 7.3 1.5 Z" fill="#2f6da6"/><path d="M10.1 19.6 C15 19.6 14.6 17.5 14.6 17.5 V15.3 H10 V14.6 H16.5 C16.5 14.6 19.6 15 19.6 10 C19.6 5 16.9 5.2 16.9 5.2 H15.2 V7.6 C15.2 7.6 15.3 10.3 12.5 10.3 H7.9 C7.9 10.3 5.3 10.3 5.3 12.8 V17 C5.3 17 4.9 19.6 10.1 19.6 Z M12.7 18.1 A0.85 0.85 0 1 1 12.7 16.4 A0.85 0.85 0 1 1 12.7 18.1 Z" fill="#f4c93f"/></svg>
<div class="t" style="top:728.41px;font:400 12.1px/16px 'DejaVu Sans Condensed','Liberation Sans',sans-serif;color:#1a1a1a;left:51.2px;letter-spacing:0.6px;">Main.py</div>
<svg preserveAspectRatio="none" style="left:49px;top:751.8px;overflow:visible;" width="14" height="14" viewBox="0 0 14 14"><circle cx="7" cy="7" r="7" fill="#f59a23"/><path d="M4 4.2 H10 M7 4.2 V11" stroke="#fff4dc" stroke-width="1.5" fill="none"/></svg>
<div class="t" style="top:750.81px;font:400 12.1px/16px 'DejaVu Sans Condensed','Liberation Sans',sans-serif;color:#1a1a1a;left:73px;letter-spacing:0.11px;">text_to_bits</div>
<svg preserveAspectRatio="none" style="left:49px;top:773.6px;overflow:visible;" width="14" height="14" viewBox="0 0 14 14"><circle cx="7" cy="7" r="7" fill="#f59a23"/><path d="M4 4.2 H10 M7 4.2 V11" stroke="#fff4dc" stroke-width="1.5" fill="none"/></svg>
<div class="t" style="top:772.61px;font:400 12.1px/16px 'DejaVu Sans Condensed','Liberation Sans',sans-serif;color:#1a1a1a;left:73px;letter-spacing:0.24px;">text_from_bits</div>
<div style="left:1.6px;top:790px;width:217px;height:10.2px;overflow:hidden"><svg style="left:47.4px;top:6.6px" width="14" height="14" viewBox="0 0 14 14"><circle cx="7" cy="7" r="7" fill="#f59a23"/></svg><div class="q" style="left:71.4px;top:4.6px;font:400 12.1px/16px 'DejaVu Sans Condensed','Liberation Sans',sans-serif;color:#1a1a1a">int2bytes</div></div>
<div style="left:219px;top:724.6px;width:17.4px;height:75.6px;background:#f0f0f0;"></div>
<div style="left:219px;top:744px;width:16.2px;height:18px;background:#c8c8c8;"></div>
<svg preserveAspectRatio="none" style="left:222.8px;top:729.8px;overflow:visible;" width="8.8" height="8.8" viewBox="0 0 8.8 8.8"><g transform="rotate(180 4.4 4.4)"><path d="M0.8 2.4 L4.4 6.2 L8 2.4" stroke="#4c4c4c" stroke-width="2.1" fill="none"/></g></svg>
<svg preserveAspectRatio="none" style="left:222.8px;top:786.2px;overflow:visible;" width="8.8" height="8.8" viewBox="0 0 8.8 8.8"><g transform="rotate(0 4.4 4.4)"><path d="M0.8 2.4 L4.4 6.2 L8 2.4" stroke="#4c4c4c" stroke-width="2.1" fill="none"/></g></svg>
<div style="left:242.4px;top:110.2px;width:948.2px;height:19.4px;background:#dbdbdb;border:1px solid #cdcdcd;"></div>
<div class="t" style="top:113.61px;font:400 12.1px/16px 'DejaVu Sans Condensed','Liberation Sans',sans-serif;color:#1a1a1a;left:246.6px;letter-spacing:-0.04px;">Editor - C:\Users\EARTH1\Desktop\Runable code\Main.py</div>
<svg preserveAspectRatio="none" style="left:1158.6px;top:114.7px;overflow:visible;" width="9.2" height="9.6" viewBox="0 0 9.4 9.6"><rect x="3" y="0.7" width="5.6" height="5" fill="none" stroke="#222" stroke-width="1.3"/><rect x="2.6" y="0.2" width="6.4" height="1.8" fill="#222"/><rect x="0.7" y="3.8" width="5.6" height="5" fill="#dcdcdc" stroke="#222" stroke-width="1.3"/><rect x="0.2" y="3.3" width="6.6" height="1.9" fill="#222"/></svg>
<svg preserveAspectRatio="none" style="left:1176.6px;top:115.7px;overflow:visible;" width="8.6" height="8.4" viewBox="0 0 8.8 8.8"><path d="M0.8 0.8 L8 8 M8 0.8 L0.8 8" stroke="#111" stroke-width="1.7" fill="none"/></svg>
<svg preserveAspectRatio="none" style="left:247px;top:140.8px;overflow:visible;" width="15.6" height="13.8" viewBox="0 0 15.6 14"><path d="M0.7 11 V1.4 Q0.7 0.7 1.4 0.7 H5 L6.6 2.6 H12 Q12.8 2.6 12.8 3.4 V11 Q12.8 11.6 12.2 11.6 H1.3 Q0.7 11.6 0.7 11 Z" fill="none" stroke="#222" stroke-width="1.4"/><path d="M10.6 11.2 H15.4 L13 13.8 Z" fill="#222"/></svg>
<div style="left:269.6px;top:135.6px;width:108.4px;height:24px;background:#e4e4e4;border:1px solid #c6c6c6;"></div>
<div class="t" style="top:139.61px;font:400 12.1px/16px 'DejaVu Sans Condensed','Liberation Sans',sans-serif;color:#1a1a1a;left:279.6px;letter-spacing:-0.18px;">untitled5.py</div>
<svg preserveAspectRatio="none" style="left:348.8px;top:139px;overflow:visible;" width="15.2" height="15.8" viewBox="0 0 15.4 16"><rect x="0.5" y="0.5" width="14.4" height="15" rx="2.6" fill="#c6c6c6" stroke="#b8b8b8" stroke-width="1"/><path d="M4.4 4.6 L11 11.4 M11 4.6 L4.4 11.4" stroke="#f6f6f6" stroke-width="2.5" fill="none"/></svg>
<div style="left:242.4px;top:159.4px;width:948.2px;height:372px;background:#f8f8f8;border:1px solid #6ba1da;"></div>
<div style="left:243.4px;top:160.4px;width:946.2px;height:1px;background:#c4daf0;"></div>
<div style="left:377.4px;top:133.4px;width:92.2px;height:28px;background:#f8f8f8;border:1px solid #c6c6c6;border-bottom:none;"></div>
<div class="t" style="top:139.01px;font:400 12.1px/16px 'DejaVu Sans Condensed','Liberation Sans',sans-serif;color:#1a1a1a;left:392px;letter-spacing:-0.23px;">Main.py</div>
<svg preserveAspectRatio="none" style="left:438.8px;top:137.8px;overflow:visible;" width="15.4" height="16" viewBox="0 0 15.4 16"><rect x="0.5" y="0.5" width="14.4" height="15" rx="2.6" fill="#e3743f" stroke="#cc6430" stroke-width="1"/><path d="M4.4 4.6 L11 11.4 M11 4.6 L4.4 11.4" stroke="#fff" stroke-width="2.5" fill="none"/></svg>
<svg preserveAspectRatio="none" style="left:1171px;top:140.2px;overflow:visible;" width="15.6" height="14.4" viewBox="0 0 15.6 14.6"><rect x="5.10" y="0.00" width="3" height="3.4" fill="#2e2e2e" transform="rotate(0 6.60 6.60)"/><rect x="5.10" y="0.00" width="3" height="3.4" fill="#2e2e2e" transform="rotate(45 6.60 6.60)"/><rect x="5.10" y="0.00" width="3" height="3.4" fill="#2e2e2e" transform="rotate(90 6.60 6.60)"/><rect x="5.10" y="0.00" width="3" height="3.4" fill="#2e2e2e" transform="rotate(135 6.60 6.60)"/><rect x="5.10" y="0.00" width="3" height="3.4" fill="#2e2e2e" transform="rotate(180 6.60 6.60)"/><rect x="5.10" y="0.00" width="3" height="3.4" fill="#2e2e2e" transform="rotate(225 6.60 6.60)"/><rect x="5.10" y="0.00" width="3" height="3.4" fill="#2e2e2e" transform="rotate(270 6.60 6.60)"/><rect x="5.10" y="0.00" width="3" height="3.4" fill="#2e2e2e" transform="rotate(315 6.60 6.60)"/><circle cx="6.6" cy="6.6" r="4.7" fill="#2e2e2e"/><circle cx="6.6" cy="6.6" r="2.5" fill="#f0f0f0"/><path d="M10.4 11.6 H15.6 L13 14.4 Z" fill="#2e2e2e"/></svg>
<div style="left:243.4px;top:160.4px;width:42px;height:350.6px;background:#ededed;"></div>
<div style="left:290.4px;top:212.6px;width:866.4px;height:16.6px;background:#f6eff4;"></div>
<div style="left:290.4px;top:216px;width:866.4px;height:13.2px;background:#eee8f5;"></div>
<div style="left:898px;top:160.4px;width:1.2px;height:351.6px;background:#bdbdbd;"></div>
<div style="left:1156.8px;top:160.4px;width:13.4px;height:351.6px;background:#e9e9e9;"></div>
<div style="left:1156.8px;top:160.4px;width:13.4px;height:51.4px;background:#f0f0f0;"></div>
<div style="left:1165.2px;top:160.4px;width:5px;height:46.8px;background:#f9f9f9;"></div>
<pre style="left:290.3px;top:165.52px;font:400 12.79px/16.5px 'DejaVu Sans Mono','Liberation Mono',monospace;color:#141414"><span style="color:#2222d4">import</span> Cimpl
<span style="color:#2222d4">import</span> binascii
<span style="color:#2222d4">import</span> time


<span style="color:#2222d4">def</span> <b>text_to_bits</b>(text, encoding=<span style="color:#1ca32a">'utf-8'</span>, errors=<span style="color:#1ca32a">'surrogatepass'</span>):
    bits = <span style="color:#a834a4">bin</span>(<span style="color:#a834a4">int</span>(binascii.hexlify(text.encode(encoding, errors)), <span style="color:#962c20">16</span>))[<span style="color:#962c20">2</span>:]
    <span style="color:#2222d4">return</span> bits.zfill(<span style="color:#962c20">8</span> * ((<span style="color:#a834a4">len</span>(bits) + <span style="color:#962c20">7</span>) // <span style="color:#962c20">8</span>))

<span style="color:#2222d4">def</span> <b>text_from_bits</b>(bits, encoding=<span style="color:#1ca32a">'utf-8'</span>, errors=<span style="color:#1ca32a">'surrogatepass'</span>):
    n = <span style="color:#a834a4">int</span>(bits, <span style="color:#962c20">2</span>)
    <span style="color:#2222d4">return</span> int2bytes(n).decode(encoding, errors)

<span style="color:#2222d4">def</span> <b>int2bytes</b>(i):
    hex_string = <span style="color:#1ca32a">'%x'</span> % i
    n = <span style="color:#a834a4">len</span>(hex_string)
    <span style="color:#2222d4">return</span> binascii.unhexlify(hex_string.zfill(n + (n &amp; <span style="color:#962c20">1</span>)))


<span style="color:#2222d4">def</span> <b>encrypt</b>(img, string):
    i = <span style="color:#962c20">0</span></pre>
<pre style="left:243.4px;width:42.4px;text-align:right;top:165.52px;font:400 12.79px/16.5px 'DejaVu Sans Mono','Liberation Mono',monospace;color:#8a8a8a">1
2
3
<b style="color:#101010">4</b>
5
6
7
8
9
10
11
12
13
14
15
16
17
18
19
20
21</pre>
<div style="left:1170.2px;top:160.4px;width:19.4px;height:351.6px;background:#f0f0f0;"></div>
<div style="left:1172.2px;top:179px;width:16.2px;height:42.4px;background:#c8c8c8;"></div>
<svg preserveAspectRatio="none" style="left:1176px;top:165.6px;overflow:visible;" width="8.8" height="8.8" viewBox="0 0 8.8 8.8"><g transform="rotate(180 4.4 4.4)"><path d="M0.8 2.4 L4.4 6.2 L8 2.4" stroke="#4c4c4c" stroke-width="2.1" fill="none"/></g></svg>
<svg preserveAspectRatio="none" style="left:1176px;top:498px;overflow:visible;" width="8.8" height="8.8" viewBox="0 0 8.8 8.8"><g transform="rotate(0 4.4 4.4)"><path d="M0.8 2.4 L4.4 6.2 L8 2.4" stroke="#4c4c4c" stroke-width="2.1" fill="none"/></g></svg>
<div style="left:243.4px;top:512px;width:926.8px;height:18px;background:#f0f0f0;"></div>
<div style="left:262px;top:513px;width:353.4px;height:16px;background:#c6c6c6;"></div>
<svg preserveAspectRatio="none" style="left:248px;top:516.6px;overflow:visible;" width="8.8" height="8.8" viewBox="0 0 8.8 8.8"><g transform="rotate(90 4.4 4.4)"><path d="M0.8 2.4 L4.4 6.2 L8 2.4" stroke="#4c4c4c" stroke-width="2.1" fill="none"/></g></svg>
<svg preserveAspectRatio="none" style="left:1156.8px;top:516.6px;overflow:visible;" width="8.8" height="8.8" viewBox="0 0 8.8 8.8"><g transform="rotate(270 4.4 4.4)"><path d="M0.8 2.4 L4.4 6.2 L8 2.4" stroke="#4c4c4c" stroke-width="2.1" fill="none"/></g></svg>
<div style="left:1170.2px;top:512px;width:19.4px;height:18px;background:#f0f0f0;"></div>
<div style="left:242.4px;top:530px;width:948.2px;height:1px;background:#6ba1da;"></div>
<div style="left:241.4px;top:531px;width:950.2px;height:6px;background:#f0f0f0;"></div>
<div style="left:242.4px;top:537px;width:948.2px;height:19.6px;background:#dbdbdb;border:1px solid #cdcdcd;"></div>
<div class="t" style="top:540.61px;font:400 12.1px/16px 'DejaVu Sans Condensed','Liberation Sans',sans-serif;color:#1a1a1a;left:246.6px;letter-spacing:-0.09px;">IPython console</div>
<svg preserveAspectRatio="none" style="left:1158.6px;top:541.6px;overflow:visible;" width="9.2" height="9.6" viewBox="0 0 9.4 9.6"><rect x="3" y="0.7" width="5.6" height="5" fill="none" stroke="#222" stroke-width="1.3"/><rect x="2.6" y="0.2" width="6.4" height="1.8" fill="#222"/><rect x="0.7" y="3.8" width="5.6" height="5" fill="#dcdcdc" stroke="#222" stroke-width="1.3"/><rect x="0.2" y="3.3" width="6.6" height="1.9" fill="#222"/></svg>
<svg preserveAspectRatio="none" style="left:1176.6px;top:542.6px;overflow:visible;" width="8.6" height="8.4" viewBox="0 0 8.8 8.8"><path d="M0.8 0.8 L8 8 M8 0.8 L0.8 8" stroke="#111" stroke-width="1.7" fill="none"/></svg>
<svg preserveAspectRatio="none" style="left:246.6px;top:567.8px;overflow:visible;" width="16" height="13.8" viewBox="0 0 15.6 14"><path d="M0.7 11 V1.4 Q0.7 0.7 1.4 0.7 H5 L6.6 2.6 H12 Q12.8 2.6 12.8 3.4 V11 Q12.8 11.6 12.2 11.6 H1.3 Q0.7 11.6 0.7 11 Z" fill="none" stroke="#222" stroke-width="1.4"/><path d="M10.6 11.2 H15.4 L13 13.8 Z" fill="#222"/></svg>
<div style="left:242.4px;top:585.6px;width:948.2px;height:216px;background:#f8f8f8;border:1px solid #9c9c9c;"></div>
<div style="left:267.6px;top:559.8px;width:118.2px;height:26.6px;background:#f8f8f8;border:1px solid #c6c6c6;border-bottom:none;"></div>
<div class="t" style="top:565.41px;font:400 12.1px/16px 'DejaVu Sans Condensed','Liberation Sans',sans-serif;color:#1a1a1a;left:279.6px;letter-spacing:-0.12px;">Console 15/A</div>
<svg preserveAspectRatio="none" style="left:355px;top:564.4px;overflow:visible;" width="15.6" height="16" viewBox="0 0 15.4 16"><rect x="0.5" y="0.5" width="14.4" height="15" rx="2.6" fill="#e3743f" stroke="#cc6430" stroke-width="1"/><path d="M4.4 4.6 L11 11.4 M11 4.6 L4.4 11.4" stroke="#fff" stroke-width="2.5" fill="none"/></svg>
<div style="left:1122.6px;top:567.2px;width:13.4px;height:13px;background:#9c1409;"></div>
<svg preserveAspectRatio="none" style="left:1144.8px;top:568.8px;overflow:visible;" width="16.2" height="10" viewBox="0 0 16.4 10.6"><path d="M5.8 0.7 H15.8 L10.4 9.9 H0.6 Z" fill="#f6f6f6" stroke="#2e2e2e" stroke-width="1.3" stroke-linejoin="round"/><path d="M5.8 0.7 H15.8 L12.6 6.2 H2.6 Z" fill="#2e2e2e"/></svg>
<svg preserveAspectRatio="none" style="left:1171.4px;top:567.6px;overflow:visible;" width="15.4" height="14" viewBox="0 0 15.6 14.6"><rect x="5.10" y="0.00" width="3" height="3.4" fill="#2e2e2e" transform="rotate(0 6.60 6.60)"/><rect x="5.10" y="0.00" width="3" height="3.4" fill="#2e2e2e" transform="rotate(45 6.60 6.60)"/><rect x="5.10" y="0.00" width="3" height="3.4" fill="#2e2e2e" transform="rotate(90 6.60 6.60)"/><rect x="5.10" y="0.00" width="3" height="3.4" fill="#2e2e2e" transform="rotate(135 6.60 6.60)"/><rect x="5.10" y="0.00" width="3" height="3.4" fill="#2e2e2e" transform="rotate(180 6.60 6.60)"/><rect x="5.10" y="0.00" width="3" height="3.4" fill="#2e2e2e" transform="rotate(225 6.60 6.60)"/><rect x="5.10" y="0.00" width="3" height="3.4" fill="#2e2e2e" transform="rotate(270 6.60 6.60)"/><rect x="5.10" y="0.00" width="3" height="3.4" fill="#2e2e2e" transform="rotate(315 6.60 6.60)"/><circle cx="6.6" cy="6.6" r="4.7" fill="#2e2e2e"/><circle cx="6.6" cy="6.6" r="2.5" fill="#f0f0f0"/><path d="M10.4 11.6 H15.6 L13 14.4 Z" fill="#2e2e2e"/></svg>
<pre style="left:247.5px;top:592.12px;font:400 12.79px/16.5px 'DejaVu Sans Mono','Liberation Mono',monospace;color:#161616">Python 3.7.1 (default, Dec 10 2018, 22:54:23) [MSC v.1915 64 bit (AMD64)]
Type "copyright", "credits" or "license" for more information.

IPython 7.2.0 -- An enhanced Interactive Python.

<span style="color:#1c1c84">In [</span><b style="color:#1c1c84">1</b><span style="color:#1c1c84">]:</span> runfile(<span style="color:#28a548">'C:/Users/EARTH1/Desktop/Runable code/Main.py'</span>, wdir=<span style="color:#28a548">'C:/Users/EARTH1/Desktop/Runable code'</span>)
Cimpl 1.00 Release Candidate 3
To Encrypt text into a image enter 'E'.
To Decrypt a image enter 'D'.
If you would like to Quit enter 'Q'

Select:</pre>
<div style="left:1172px;top:586.6px;width:17.6px;height:214px;background:#f0f0f0;"></div>
<div style="left:1172.2px;top:605.8px;width:16.2px;height:89.8px;background:#c8c8c8;"></div>
<svg preserveAspectRatio="none" style="left:1176px;top:591.8px;overflow:visible;" width="8.8" height="8.8" viewBox="0 0 8.8 8.8"><g transform="rotate(180 4.4 4.4)"><path d="M0.8 2.4 L4.4 6.2 L8 2.4" stroke="#4c4c4c" stroke-width="2.1" fill="none"/></g></svg>
<svg preserveAspectRatio="none" style="left:1176px;top:786.6px;overflow:visible;" width="8.8" height="8.8" viewBox="0 0 8.8 8.8"><g transform="rotate(0 4.4 4.4)"><path d="M0.8 2.4 L4.4 6.2 L8 2.4" stroke="#4c4c4c" stroke-width="2.1" fill="none"/></g></svg>
<div style="left:1195.6px;top:110.2px;width:306.8px;height:19.4px;background:#dbdbdb;border:1px solid #cdcdcd;"></div>
<div class="t" style="top:113.61px;font:400 12.1px/16px 'DejaVu Sans Condensed','Liberation Sans',sans-serif;color:#1a1a1a;left:1199.8px;letter-spacing:-0.21px;">Variable explorer</div>
<svg preserveAspectRatio="none" style="left:1470.4px;top:114.7px;overflow:visible;" width="9.2" height="9.6" viewBox="0 0 9.4 9.6"><rect x="3" y="0.7" width="5.6" height="5" fill="none" stroke="#222" stroke-width="1.3"/><rect x="2.6" y="0.2" width="6.4" height="1.8" fill="#222"/><rect x="0.7" y="3.8" width="5.6" height="5" fill="#dcdcdc" stroke="#222" stroke-width="1.3"/><rect x="0.2" y="3.3" width="6.6" height="1.9" fill="#222"/></svg>
<svg preserveAspectRatio="none" style="left:1488.4px;top:115.7px;overflow:visible;" width="8.6" height="8.4" viewBox="0 0 8.8 8.8"><path d="M0.8 0.8 L8 8 M8 0.8 L0.8 8" stroke="#111" stroke-width="1.7" fill="none"/></svg>
<svg preserveAspectRatio="none" style="left:1199.6px;top:137.4px;overflow:visible;" width="14.6" height="12.8" viewBox="0 0 14.4 12.6"><path d="M5 0 H9.4 V4.6 H12.4 L7.2 9.6 L2 4.6 H5 Z" fill="#2e2e2e"/><path d="M0 8.6 H3 L5.2 10.8 H9.2 L11.4 8.6 H14.4 V12.6 H0 Z" fill="#2e2e2e"/><rect x="11" y="10.6" width="1.1" height="1.1" fill="#f0f0f0"/></svg>
<svg preserveAspectRatio="none" style="left:1228.4px;top:138.4px;overflow:visible;" width="13.2" height="12.8" viewBox="0 0 20 20"><path d="M1 1 H14.5 L19 5.5 V19 H1 Z" fill="#ececec" stroke="#b4b4b4" stroke-width="1.7" stroke-linejoin="round"/><rect x="4.6" y="1.2" width="8.6" height="6" fill="none" stroke="#b4b4b4" stroke-width="1.5"/><rect x="9.6" y="2.2" width="2.2" height="3.6" fill="#b4b4b4"/><rect x="4.2" y="12" width="11.6" height="6.6" fill="none" stroke="#b4b4b4" stroke-width="1.5"/></svg>
<svg preserveAspectRatio="none" style="left:1254.4px;top:137.8px;overflow:visible;" width="14.8" height="14.8" viewBox="0 0 14.8 15.8"><g transform="translate(0.00 0.00) scale(0.440)"><path d="M1 1 H14.5 L19 5.5 V19 H1 Z" fill="#e8e8e8" stroke="#2e2e2e" stroke-width="2.6" stroke-linejoin="round"/><rect x="4.6" y="1.2" width="8.6" height="5.6" fill="#2e2e2e"/><rect x="4.6" y="12.2" width="10.8" height="6" fill="#e8e8e8" stroke="#2e2e2e" stroke-width="1.6"/></g><path d="M6.2 12.6 L11.8 7 L14.4 9.6 L8.8 15.2 L5.6 15.8 Z" fill="#2e2e2e"/></svg>
<svg preserveAspectRatio="none" style="left:1281px;top:139.4px;overflow:visible;" width="16.6" height="10.8" viewBox="0 0 16.4 10.6"><path d="M5.8 0.7 H15.8 L10.4 9.9 H0.6 Z" fill="#f6f6f6" stroke="#2e2e2e" stroke-width="1.3" stroke-linejoin="round"/><path d="M5.8 0.7 H15.8 L12.6 6.2 H2.6 Z" fill="#2e2e2e"/></svg>
<svg preserveAspectRatio="none" style="left:1482.4px;top:138.2px;overflow:visible;" width="15.6" height="14.2" viewBox="0 0 15.6 14.6"><rect x="5.10" y="0.00" width="3" height="3.4" fill="#2e2e2e" transform="rotate(0 6.60 6.60)"/><rect x="5.10" y="0.00" width="3" height="3.4" fill="#2e2e2e" transform="rotate(45 6.60 6.60)"/><rect x="5.10" y="0.00" width="3" height="3.4" fill="#2e2e2e" transform="rotate(90 6.60 6.60)"/><rect x="5.10" y="0.00" width="3" height="3.4" fill="#2e2e2e" transform="rotate(135 6.60 6.60)"/><rect x="5.10" y="0.00" width="3" height="3.4" fill="#2e2e2e" transform="rotate(180 6.60 6.60)"/><rect x="5.10" y="0.00" width="3" height="3.4" fill="#2e2e2e" transform="rotate(225 6.60 6.60)"/><rect x="5.10" y="0.00" width="3" height="3.4" fill="#2e2e2e" transform="rotate(270 6.60 6.60)"/><rect x="5.10" y="0.00" width="3" height="3.4" fill="#2e2e2e" transform="rotate(315 6.60 6.60)"/><circle cx="6.6" cy="6.6" r="4.7" fill="#2e2e2e"/><circle cx="6.6" cy="6.6" r="2.5" fill="#f0f0f0"/><path d="M10.4 11.6 H15.6 L13 14.4 Z" fill="#2e2e2e"/></svg>
<div style="left:1195.6px;top:159.4px;width:310px;height:353.2px;background:#f8f8f8;border:1px solid #9c9c9c;"></div>
<div class="t" style="top:165.41px;font:400 12.1px/16px 'DejaVu Sans Condensed','Liberation Sans',sans-serif;color:#1a1a1a;left:1201.6px;letter-spacing:0.62px;">Name</div>
<div class="t" style="top:165.41px;font:400 12.1px/16px 'DejaVu Sans Condensed','Liberation Sans',sans-serif;color:#1a1a1a;left:1247.8px;letter-spacing:0.45px;">Type</div>
<div class="t" style="top:165.41px;font:400 12.1px/16px 'DejaVu Sans Condensed','Liberation Sans',sans-serif;color:#1a1a1a;left:1290.8px;letter-spacing:-0.09px;">Size</div>
<div class="t" style="top:165.41px;font:400 12.1px/16px 'DejaVu Sans Condensed','Liberation Sans',sans-serif;color:#1a1a1a;left:1395px;letter-spacing:0.56px;">Value</div>
<svg preserveAspectRatio="none" style="left:1215.2px;top:161.6px;overflow:visible;" width="6.8" height="3.6" viewBox="0 0 8 4"><path d="M0 4 L4 0 L8 4 Z" fill="#4b8fd0"/></svg>
<div style="left:1240px;top:161px;width:1px;height:22px;background:#edf4f9;"></div>
<div style="left:1281.6px;top:161px;width:1px;height:22px;background:#edf4f9;"></div>
<div style="left:1322px;top:161px;width:1px;height:22px;background:#edf4f9;"></div>
<div style="left:1196.6px;top:182.6px;width:304px;height:3px;background:#ebf3f9;"></div>
<div style="left:1195.6px;top:519px;width:306.8px;height:19.6px;background:#dbdbdb;border:1px solid #cdcdcd;"></div>
<div class="t" style="top:522.61px;font:400 12.1px/16px 'DejaVu Sans Condensed','Liberation Sans',sans-serif;color:#1a1a1a;left:1199.8px;letter-spacing:-0.36px;">Help</div>
<svg preserveAspectRatio="none" style="left:1470.4px;top:523.6px;overflow:visible;" width="9.2" height="9.6" viewBox="0 0 9.4 9.6"><rect x="3" y="0.7" width="5.6" height="5" fill="none" stroke="#222" stroke-width="1.3"/><rect x="2.6" y="0.2" width="6.4" height="1.8" fill="#222"/><rect x="0.7" y="3.8" width="5.6" height="5" fill="#dcdcdc" stroke="#222" stroke-width="1.3"/><rect x="0.2" y="3.3" width="6.6" height="1.9" fill="#222"/></svg>
<svg preserveAspectRatio="none" style="left:1488.4px;top:524.6px;overflow:visible;" width="8.6" height="8.4" viewBox="0 0 8.8 8.8"><path d="M0.8 0.8 L8 8 M8 0.8 L0.8 8" stroke="#111" stroke-width="1.7" fill="none"/></svg>
<div class="t" style="top:547.01px;font:400 12.1px/16px 'DejaVu Sans Condensed','Liberation Sans',sans-serif;color:#1a1a1a;left:1195.6px;letter-spacing:-0.46px;">Source</div>
<div style="left:1233.8px;top:543.2px;width:70.4px;height:21px;background:#e3e3e3;border:1px solid #adadad;"></div>
<div class="t" style="top:547.01px;font:400 12.1px/16px 'DejaVu Sans Condensed','Liberation Sans',sans-serif;color:#1a1a1a;left:1238px;letter-spacing:-0.29px;">Console</div>
<svg style="left:1289.8px;top:552px;" width="7.8" height="4.6" viewBox="0 0 7.8 4.6"><path d="M0 0 H7.8 L3.9 4.6 Z" fill="#222"/></svg>
<div class="t" style="top:547.01px;font:400 12.1px/16px 'DejaVu Sans Condensed','Liberation Sans',sans-serif;color:#1a1a1a;left:1317.2px;letter-spacing:-0.07px;">Object</div>
<div style="left:1355.2px;top:543.2px;width:91.6px;height:21px;background:#f8f8f8;border:1px solid #b4b4b4;"></div>
<svg preserveAspectRatio="none" style="left:1433.2px;top:551.4px;overflow:visible;" width="9" height="6" viewBox="0 0 8.8 5.8"><path d="M0.7 0.8 L4.4 4.8 L8.1 0.8" stroke="#333" stroke-width="1.6" fill="none"/></svg>
<svg preserveAspectRatio="none" style="left:1456px;top:546.6px;overflow:visible;" width="10.2" height="12.6" viewBox="0 0 10 12.6"><rect x="0" y="5.6" width="9.6" height="6.8" rx="0.8" fill="#2e2e2e"/><path d="M2 5.8 V3.6 Q2 1 4.8 1 Q7.6 1 7.6 3.6 V4.2" fill="none" stroke="#2e2e2e" stroke-width="1.7"/></svg>
<svg preserveAspectRatio="none" style="left:1482.4px;top:547.4px;overflow:visible;" width="15.2" height="14" viewBox="0 0 15.6 14.6"><rect x="5.10" y="0.00" width="3" height="3.4" fill="#2e2e2e" transform="rotate(0 6.60 6.60)"/><rect x="5.10" y="0.00" width="3" height="3.4" fill="#2e2e2e" transform="rotate(45 6.60 6.60)"/><rect x="5.10" y="0.00" width="3" height="3.4" fill="#2e2e2e" transform="rotate(90 6.60 6.60)"/><rect x="5.10" y="0.00" width="3" height="3.4" fill="#2e2e2e" transform="rotate(135 6.60 6.60)"/><rect x="5.10" y="0.00" width="3" height="3.4" fill="#2e2e2e" transform="rotate(180 6.60 6.60)"/><rect x="5.10" y="0.00" width="3" height="3.4" fill="#2e2e2e" transform="rotate(225 6.60 6.60)"/><rect x="5.10" y="0.00" width="3" height="3.4" fill="#2e2e2e" transform="rotate(270 6.60 6.60)"/><rect x="5.10" y="0.00" width="3" height="3.4" fill="#2e2e2e" transform="rotate(315 6.60 6.60)"/><circle cx="6.6" cy="6.6" r="4.7" fill="#2e2e2e"/><circle cx="6.6" cy="6.6" r="2.5" fill="#f0f0f0"/><path d="M10.4 11.6 H15.6 L13 14.4 Z" fill="#2e2e2e"/></svg>
<div style="left:1195.6px;top:568.4px;width:310px;height:210.4px;background:#f8f8f8;border:1px solid #9c9c9c;overflow:hidden">
<div style="left:72.6px;top:16.6px;width:141px;height:260px;background:#fdfdfd;border:1px solid #86c2e8;border-radius:5px"></div>
<div style="left:72.6px;top:16.6px;width:141px;height:41.6px;background:#1e94dc;border-radius:5px 5px 0 0"></div>
<div class="q" style="left:90.4px;top:27.2px;font:400 15.8px/20px 'Liberation Sans','DejaVu Sans',sans-serif;color:#fff;letter-spacing:-0.1px">Usage</div>
<pre style="left:90.4px;top:75.1px;font:400 14.2px/16.5px 'Liberation Sans','DejaVu Sans',sans-serif;color:#454545;letter-spacing:0.04px">Here you can
get help of any
object by
pressing <b style="color:#333">Ctrl+I</b>
in front of it,
either on the
Editor or the
Console.</pre>
</div>
<div style="left:1484.4px;top:569.4px;width:16px;height:208.4px;background:#f0f0f0;"></div>
<div style="left:1486px;top:588px;width:12.8px;height:71.6px;background:#c1c1c1;"></div>
<svg style="left:1488.4px;top:577.4px;" width="8" height="4.4" viewBox="0 0 8 4.4"><path d="M0 4.4 L4 0 L8 4.4 Z" fill="#c4c4c4"/></svg>
<svg style="left:1488.4px;top:765px;" width="8" height="4.4" viewBox="0 0 8 4.4"><path d="M0 0 H8 L4 4.4 Z" fill="#444"/></svg>
<div style="left:1199px;top:779px;width:78.4px;height:20.8px;background:#e4e4e4;border:1px solid #c6c6c6;border-top:none;"></div>
<div class="t" style="top:781.61px;font:400 12.1px/16px 'DejaVu Sans Condensed','Liberation Sans',sans-serif;color:#1a1a1a;left:1207.6px;letter-spacing:-0.2px;">History log</div>
<div style="left:1277px;top:778px;width:50px;height:23.8px;background:#f8f8f8;border:1px solid #c6c6c6;border-top:none;"></div>
<div class="t" style="top:782.81px;font:400 12.1px/16px 'DejaVu Sans Condensed','Liberation Sans',sans-serif;color:#1a1a1a;left:1290px;letter-spacing:-0.41px;">Help</div>
<div class="t" style="top:805.61px;font:400 12.1px/16px 'DejaVu Sans Condensed','Liberation Sans',sans-serif;color:#1a1a1a;left:7px;letter-spacing:0.37px;">Run file</div>
<div class="t" style="top:805.61px;font:400 12.1px/16px 'DejaVu Sans Condensed','Liberation Sans',sans-serif;color:#1a1a1a;left:819.6px;letter-spacing:0.29px;">Permissions:</div>
<div class="t" style="top:805.61px;font:700 12.1px/16px 'DejaVu Sans Condensed','Liberation Sans',sans-serif;color:#111;left:899px;">RW</div>
<div class="t" style="top:805.61px;font:400 12.1px/16px 'DejaVu Sans Condensed','Liberation Sans',sans-serif;color:#1a1a1a;left:951.6px;letter-spacing:0.45px;">End-of-lines:</div>
<div class="t" style="top:805.61px;font:700 12.1px/16px 'DejaVu Sans Condensed','Liberation Sans',sans-serif;color:#111;left:1033.2px;">LF</div>
<div class="t" style="top:805.61px;font:400 12.1px/16px 'DejaVu Sans Condensed','Liberation Sans',sans-serif;color:#1a1a1a;left:1074.4px;letter-spacing:0.35px;">Encoding:</div>
<div class="t" style="top:805.61px;font:700 12.1px/16px 'DejaVu Sans Condensed','Liberation Sans',sans-serif;color:#111;left:1139.6px;letter-spacing:0.49px;">ASCII</div>
<div class="t" style="top:805.61px;font:400 12.1px/16px 'DejaVu Sans Condensed','Liberation Sans',sans-serif;color:#1a1a1a;left:1236.2px;letter-spacing:0.09px;">Line:</div>
<div class="t" style="top:805.61px;font:700 12.1px/16px 'DejaVu Sans Condensed','Liberation Sans',sans-serif;color:#111;left:1271.2px;">4</div>
<div class="t" style="top:805.61px;font:400 12.1px/16px 'DejaVu Sans Condensed','Liberation Sans',sans-serif;color:#1a1a1a;left:1301.6px;letter-spacing:0.67px;">Column:</div>
<div class="t" style="top:805.61px;font:700 12.1px/16px 'DejaVu Sans Condensed','Liberation Sans',sans-serif;color:#111;left:1357.6px;">1</div>
<div class="t" style="top:805.61px;font:400 12.1px/16px 'DejaVu Sans Condensed','Liberation Sans',sans-serif;color:#1a1a1a;left:1383.2px;letter-spacing:0.51px;">Memory:</div>
<div class="t" style="top:805.61px;font:700 12.1px/16px 'DejaVu Sans Condensed','Liberation Sans',sans-serif;color:#111;left:1446.2px;letter-spacing:0.39px;">70 %</div>
<div style="left:945.6px;top:806px;width:1px;height:14px;background:#e2e2e2;"></div>
<div style="left:1069.6px;top:806px;width:1px;height:14px;background:#e2e2e2;"></div>
<div style="left:1231.6px;top:806px;width:1px;height:14px;background:#e2e2e2;"></div>
<div style="left:1377.6px;top:806px;width:1px;height:14px;background:#e2e2e2;"></div>
<div style="left:0px;top:821px;width:1500px;height:23px;background:#000;"></div>
</div></body></html>
